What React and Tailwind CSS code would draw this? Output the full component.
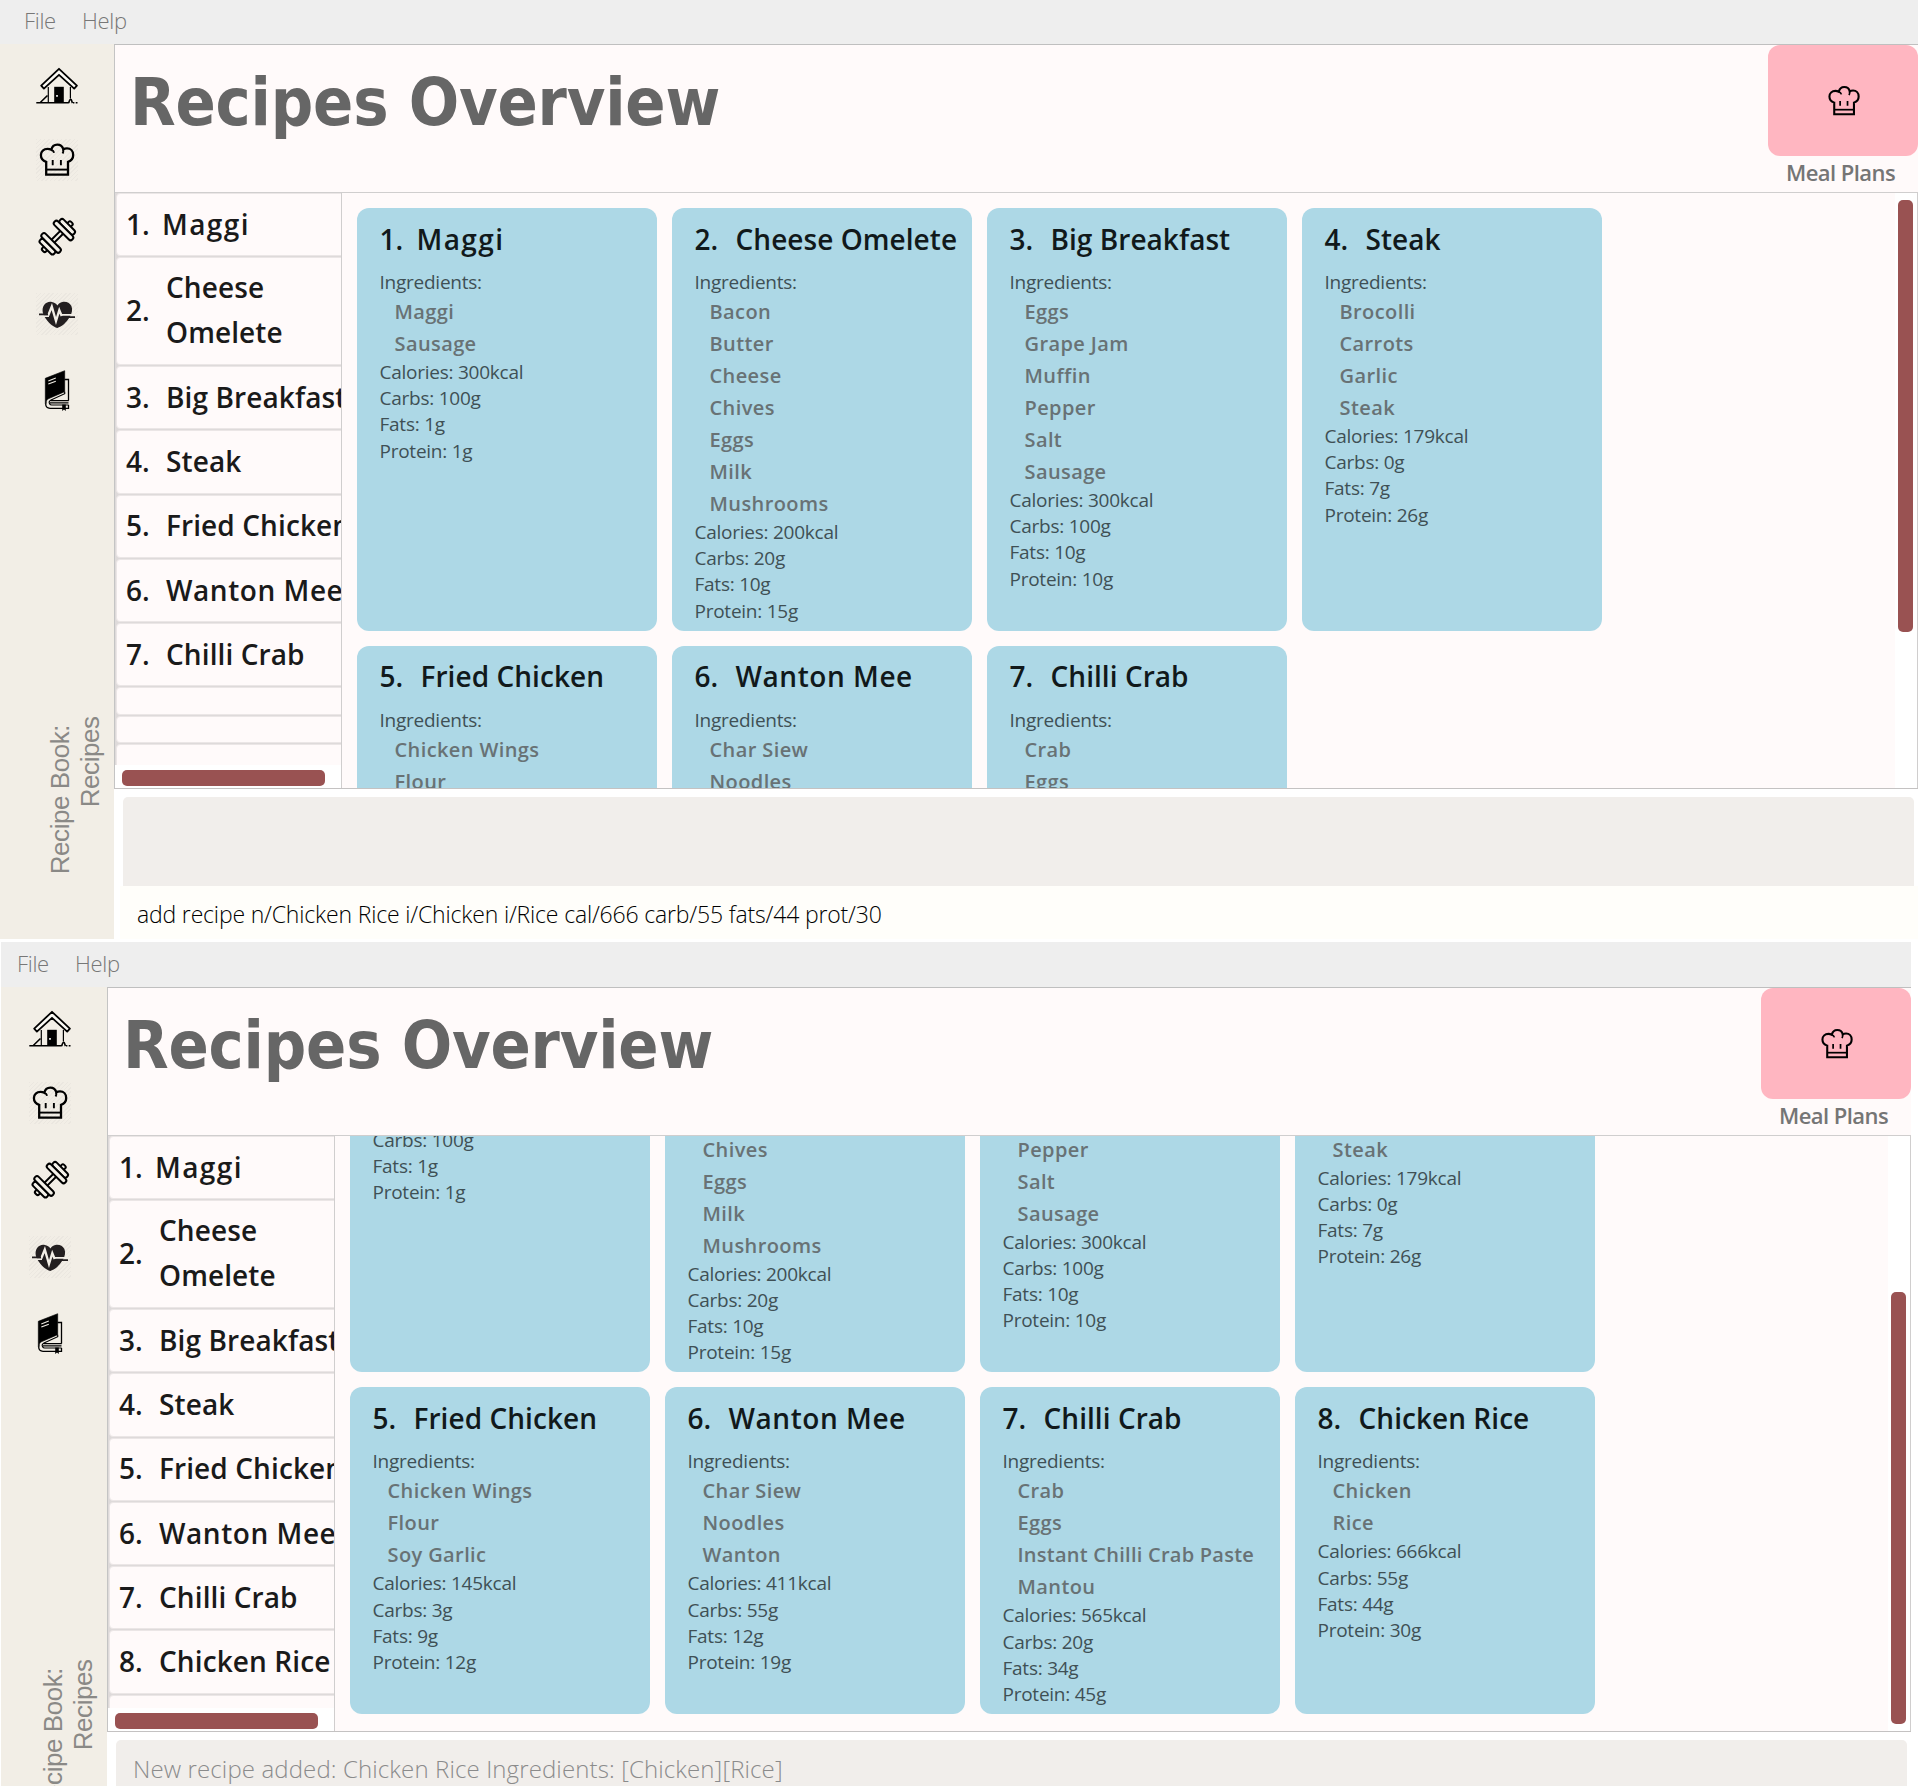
import React from "react";

const RECIPES = [
  { name: "Maggi", ingredients: ["Maggi", "Sausage"], cal: 300, carbs: 100, fats: 1, protein: 1 },
  {
    name: "Cheese Omelete",
    ingredients: ["Bacon", "Butter", "Cheese", "Chives", "Eggs", "Milk", "Mushrooms"],
    cal: 200, carbs: 20, fats: 10, protein: 15,
  },
  {
    name: "Big Breakfast",
    ingredients: ["Eggs", "Grape Jam", "Muffin", "Pepper", "Salt", "Sausage"],
    cal: 300, carbs: 100, fats: 10, protein: 10,
  },
  { name: "Steak", ingredients: ["Brocolli", "Carrots", "Garlic", "Steak"], cal: 179, carbs: 0, fats: 7, protein: 26 },
  { name: "Fried Chicken", ingredients: ["Chicken Wings", "Flour", "Soy Garlic"], cal: 145, carbs: 3, fats: 9, protein: 12 },
  { name: "Wanton Mee", ingredients: ["Char Siew", "Noodles", "Wanton"], cal: 411, carbs: 55, fats: 12, protein: 19 },
  {
    name: "Chilli Crab",
    ingredients: ["Crab", "Eggs", "Instant Chilli Crab Paste", "Mantou"],
    cal: 565, carbs: 20, fats: 34, protein: 45,
  },
];

const CHICKEN_RICE = { name: "Chicken Rice", ingredients: ["Chicken", "Rice"], cal: 666, carbs: 55, fats: 44, protein: 30 };

const NAME_TRACKING = {
  Maggi: "tracking-[1.4px]",
  "Wanton Mee": "tracking-[0.55px]",
};

function HouseIcon() {
  return (
    <svg viewBox="0 0 42 42" className="size-[42px]" fill="none" stroke="#000" strokeWidth="1.3">
      <path d="M23 6.8 5.2 23.6l2.7 3L23 12.8l15.2 13.8 2.7-3z" fill="#fbfaf5" strokeWidth="1.8" strokeLinejoin="round" />
      <path d="M12.3 25v15M34.4 25v11.5" strokeWidth="1.2" />
      <rect x="18.2" y="24.8" width="9.6" height="16" fill="#000" stroke="none" />
      <rect x="20.2" y="33" width="1.6" height="1.8" fill="#fff" stroke="none" />
      <path d="M.3 40.8h32.4M4.500 40.300 11.500 33.500M32.700 41c.4-1 .6-3.500 2-3.800 1.200.3 1 2.800 1.800 3.800M37 40.800h1.400M39.700 40.800h1.800" strokeWidth="1.6" />
    </svg>
  );
}

function ChefHatIcon({ size = "size-[42px]" }) {
  return (
    <svg viewBox="0 0 42 42" className={size} fill="none" stroke="#000" strokeWidth="2.3">
      <path d="M10.200 35.600V22.800C7 21.800 4.900 19.300 4.900 16c0-3.600 2.900-6.200 6.600-6.200 1.300 0 2.500.300 3.800 1 .700-3.300 3-5.200 6-5.200s5.300 1.700 6 4.700c1-.600 2.300-.900 3.700-.900 3.700 0 6.200 2.900 6.200 6.600 0 3.300-2 5.800-5.200 6.800v12.800z" />
      <path d="M15.300 10.800c1.500.500 2.400 1.400 2.800 2.900M27.300 10.300c.200 1.600-.100 3-.7 4.200M16.700 21v5.200M24.900 21v5.200" strokeWidth="1.900" />
      <path d="M10.200 30.600h21.800" strokeWidth="1.900" />
    </svg>
  );
}

function DumbbellIcon() {
  return (
    <svg viewBox="0 0 42 42" className="size-[42px]" fill="#f4f1e9" stroke="#000" strokeWidth="2">
      <g transform="translate(21.300 20.700) rotate(-45)">
        <rect x="-20.300" y="-2.500" width="5" height="5" rx="1.800" />
        <rect x="15.300" y="-2.500" width="5" height="5" rx="1.800" />
        <rect x="-7" y="-2" width="14" height="4" />
        <rect x="-16.600" y="-9.800" width="5.200" height="19.600" rx="2.300" />
        <rect x="11.400" y="-9.800" width="5.200" height="19.600" rx="2.300" />
        <rect x="-11.400" y="-12.600" width="5.200" height="25.200" rx="2.400" />
        <rect x="6.200" y="-12.600" width="5.200" height="25.200" rx="2.400" />
      </g>
    </svg>
  );
}

function HeartIcon() {
  return (
    <svg viewBox="0 0 42 42" className="size-[42px]" fill="none">
      <path
        d="M21.300 34.900C17 34 12 29.500 9 24.500 6.300 20.500 5.800 16 7.800 12.500c1.700-3 5-4.100 8-3.600 2.500.400 4.500 1.700 5.700 3.600 1.100-2.100 3.200-3.400 5.900-3.700 3.300-.300 6.600 1.200 8 4.300 1.500 3.600.500 7.600-1.800 11.200-3.100 5-7.900 9.800-12.300 10.600z"
        fill="#231f20"
      />
      <path d="M3 23.200h10M25.500 21.800H39" stroke="#f2eee6" strokeWidth="1.800" />
      <path d="M12.200 22.500l3.600-8.900L20 28l3.300-10.800 2.400 5.800" stroke="#f2eee6" strokeWidth="2.300" />
      <path d="M3 21.300h9M26 24.200h13" stroke="#231f20" strokeWidth="1.700" />
    </svg>
  );
}

function BookIcon() {
  return (
    <svg viewBox="0 0 42 42" className="size-[42px]" fill="none" stroke="#000" strokeWidth="1.3">
      <path d="M28.500 9.500H32.500v21M32.500 35v3.300H14c-2.600 0-4.300-1.500-4.300-4.500" />
      <path d="M9.300 8.300 28.700.7v21L13 28.500c-2.200 1-3 2.500-2.700 5l-1 .5z" fill="#000" strokeWidth=".6" />
      <path d="M28.700 21.700v2L15 30c-1.900.900-2.300 2.300-1.300 4 .4.700 1 1 2 1h17M14.500 30.700h18.300M14 32.900h18.500" strokeWidth="1.200" />
      <path d="M26.200 34.500h3.600v6.600l-1.800-1.700-1.800 1.700z" fill="#000" stroke="none" />
      <path d="m12.300 10.900 7.500-2.900M12.300 14.100l7.500-2.900" stroke="#f2eee6" strokeWidth="1.100" />
    </svg>
  );
}

function Hatched({ children }) {
  return (
    <div className="size-[42px] bg-[repeating-linear-gradient(135deg,#ebe7e0_0px,#ebe7e0_1px,#f2eee6_1px,#f2eee6_3px)]">
      {children}
    </div>
  );
}

function Sidebar() {
  return (
    <aside className="flex w-[114px] shrink-0 flex-col bg-[#f2eee6]">
      <nav className="flex flex-col gap-[35px] pt-[18px] pl-9">
        <HouseIcon />
        <Hatched><ChefHatIcon /></Hatched>
        <DumbbellIcon />
        <Hatched><HeartIcon /></Hatched>
        <BookIcon />
      </nav>
      <div className="mt-[304px] ml-[45px] rotate-180 self-start text-right font-['Liberation_Sans',sans-serif] text-[26px] leading-[30.3px] tracking-[-0.45px] whitespace-nowrap text-[#8a8986] [writing-mode:vertical-rl]">
        <div className="pb-[9px]">Recipe Book:</div>
        <div>Recipes</div>
      </div>
    </aside>
  );
}

function RecipeList({ recipes, blanks }) {
  return (
    <div className="flex w-[226px] shrink-0 flex-col">
      <div className="h-[572px] overflow-hidden bg-[#dedada] pl-px">
        {recipes.map((r, i) => (
          <div
            key={r.name}
            className={
              "mb-px flex w-[240px] items-center rounded-[4px] border border-[#ebe6e6] bg-[#fffafa] pb-0.5 pl-[9px] text-[28px] font-semibold text-[#1a1a1a] " +
              (r.name === "Cheese Omelete" ? "h-[107.7px]" : "h-[63.3px]")
            }
          >
            <span className={i === 0 ? "w-9 shrink-0" : "w-10 shrink-0"}>{i + 1}.</span>
            <span
              className={
                (r.name === "Cheese Omelete" ? "w-[140px] leading-[45.5px] " : "whitespace-nowrap ") +
                (NAME_TRACKING[r.name] || "tracking-[0.1px]")
              }
            >
              {r.name}
            </span>
          </div>
        ))}
        {Array.from({ length: blanks }, (_, i) => (
          <div key={i} className="mb-px h-[27.2px] w-[240px] rounded-[4px] border border-[#ebe6e6] bg-[#fffafa]" />
        ))}
      </div>
      <div className="flex-1 bg-white pt-[5px] pl-[7px]">
        <div className="h-4 w-[203px] rounded-[5px] bg-[#995252]" />
      </div>
    </div>
  );
}

function RecipeCard({ recipe, index }) {
  return (
    <article className="w-[300px] rounded-[12px] bg-[#add8e6] pt-[10.5px] pb-[7px] pl-[22.5px] whitespace-nowrap">
      <h2 className="mb-[9.5px] flex text-[28px] leading-10 font-semibold text-[#11191b]">
        <span className={index === 0 ? "w-[37px]" : "w-[41px]"}>{index + 1}.</span>
        <span className={NAME_TRACKING[recipe.name] || "tracking-[0.05px]"}>{recipe.name}</span>
      </h2>
      <div className="text-[19px] leading-[28px] tracking-[-0.25px] text-[#3f5055]">Ingredients:</div>
      <ul className="pl-[15px] text-[20px] leading-8 font-semibold tracking-[0.4px] text-[#687275]">
        {recipe.ingredients.map((x) => (
          <li key={x} className={x.length > 20 ? "tracking-[0.25px]" : ""}>{x}</li>
        ))}
      </ul>
      <div className="-mt-px text-[19px] leading-[26.2px] tracking-[-0.25px] text-[#3f5055]">
        <div>Calories: {recipe.cal}kcal</div>
        <div>Carbs: {recipe.carbs}g</div>
        <div>Fats: {recipe.fats}g</div>
        <div>Protein: {recipe.protein}g</div>
      </div>
    </article>
  );
}

function RecipeWindow({ recipes, blanks, gridOffset, thumbOffset, result, command }) {
  return (
    <div className="flex h-[939px] w-[1918px] shrink-0 flex-col bg-white font-['Open_Sans','Noto_Sans',sans-serif]">
      <header className="flex h-11 shrink-0 bg-[#eeeeee] pl-6 text-[22px] leading-[41px] font-light tracking-[-0.3px] text-[#777777]">
        <span className="w-[58px]">File</span>
        <span>Help</span>
      </header>
      <div className="flex min-h-0 flex-1">
        <Sidebar />
        <div className="flex w-[1804px] flex-col">
          <main className="flex h-[745px] shrink-0 flex-col border-t border-b border-l border-t-[#bfbfbf] border-b-[#c4c2c2] border-l-[#c4c4c4] bg-[#fffafa]">
            <div className="flex h-[147px] shrink-0 justify-between">
              <h1 className="pt-[13px] pl-[15px] font-['DejaVu_Sans_Condensed','DejaVu_Sans',sans-serif] text-[66px] leading-[90px] font-bold tracking-[-0.2px] text-[#666666]">
                Recipes Overview
              </h1>
              <div className="flex w-[150px] flex-col items-center">
                <div className="flex h-[111px] w-full items-center justify-center rounded-[12px] bg-[#ffb6c1] pl-0.5">
                  <ChefHatIcon size="size-[38px]" />
                </div>
                <div className="mr-[5px] text-[22px] leading-[32px] font-semibold tracking-[-0.55px] whitespace-nowrap text-[#757575]">Meal Plans</div>
              </div>
            </div>
            <div className="flex min-h-0 flex-1 border-t border-r border-[#d0cece]">
              <RecipeList recipes={recipes} blanks={blanks} />
              <div className="flex-1 overflow-hidden border-l border-[#d0cece]">
                <div className={"grid grid-cols-[repeat(4,300px)] gap-[15px] pt-[15px] pl-[15px] " + gridOffset}>
                  {recipes.map((r, i) => (
                    <RecipeCard key={r.name} recipe={r} index={i} />
                  ))}
                </div>
              </div>
              <div className={"w-[22px] shrink-0 bg-white pl-[3px] " + thumbOffset}>
                <div className="h-[432px] w-[15px] rounded-[5px] bg-[#995252]" />
              </div>
            </div>
          </main>
          <div className="mt-2 mr-1 ml-[9px] h-[89px] shrink-0 rounded-t-[5px] bg-[#f1eeeb] pt-[13px] pl-[17px] text-[24px] leading-8 font-light tracking-[0.12px] text-[#8b8b8b]">
            {result}
          </div>
          <div className="ml-1.5 flex flex-1 items-center bg-[#fffefa] pt-[3px] pl-[17px] text-[23px] font-light tracking-[-0.17px] text-[#000]">
            {command}
          </div>
        </div>
      </div>
    </div>
  );
}

export default function App() {
  return (
    <div className="flex h-[1786px] w-[1920px] flex-col gap-[3px] overflow-hidden bg-white">
      <RecipeWindow
        recipes={RECIPES}
        blanks={3}
        gridOffset=""
        thumbOffset="pt-[7px]"
        result=""
        command="add recipe n/Chicken Rice i/Chicken i/Rice cal/666 carb/55 fats/44 prot/30"
      />
      <div className="ml-px flex h-[844px] w-[1910px] shrink-0 justify-end overflow-hidden bg-[#eeeeee] pt-px">
        <RecipeWindow
          recipes={[...RECIPES, CHICKEN_RICE]}
          blanks={2}
          gridOffset="-mt-[201.4px]"
          thumbOffset="pt-[156px]"
          result="New recipe added: Chicken Rice Ingredients: [Chicken][Rice]"
          command=""
        />
      </div>
    </div>
  );
}
